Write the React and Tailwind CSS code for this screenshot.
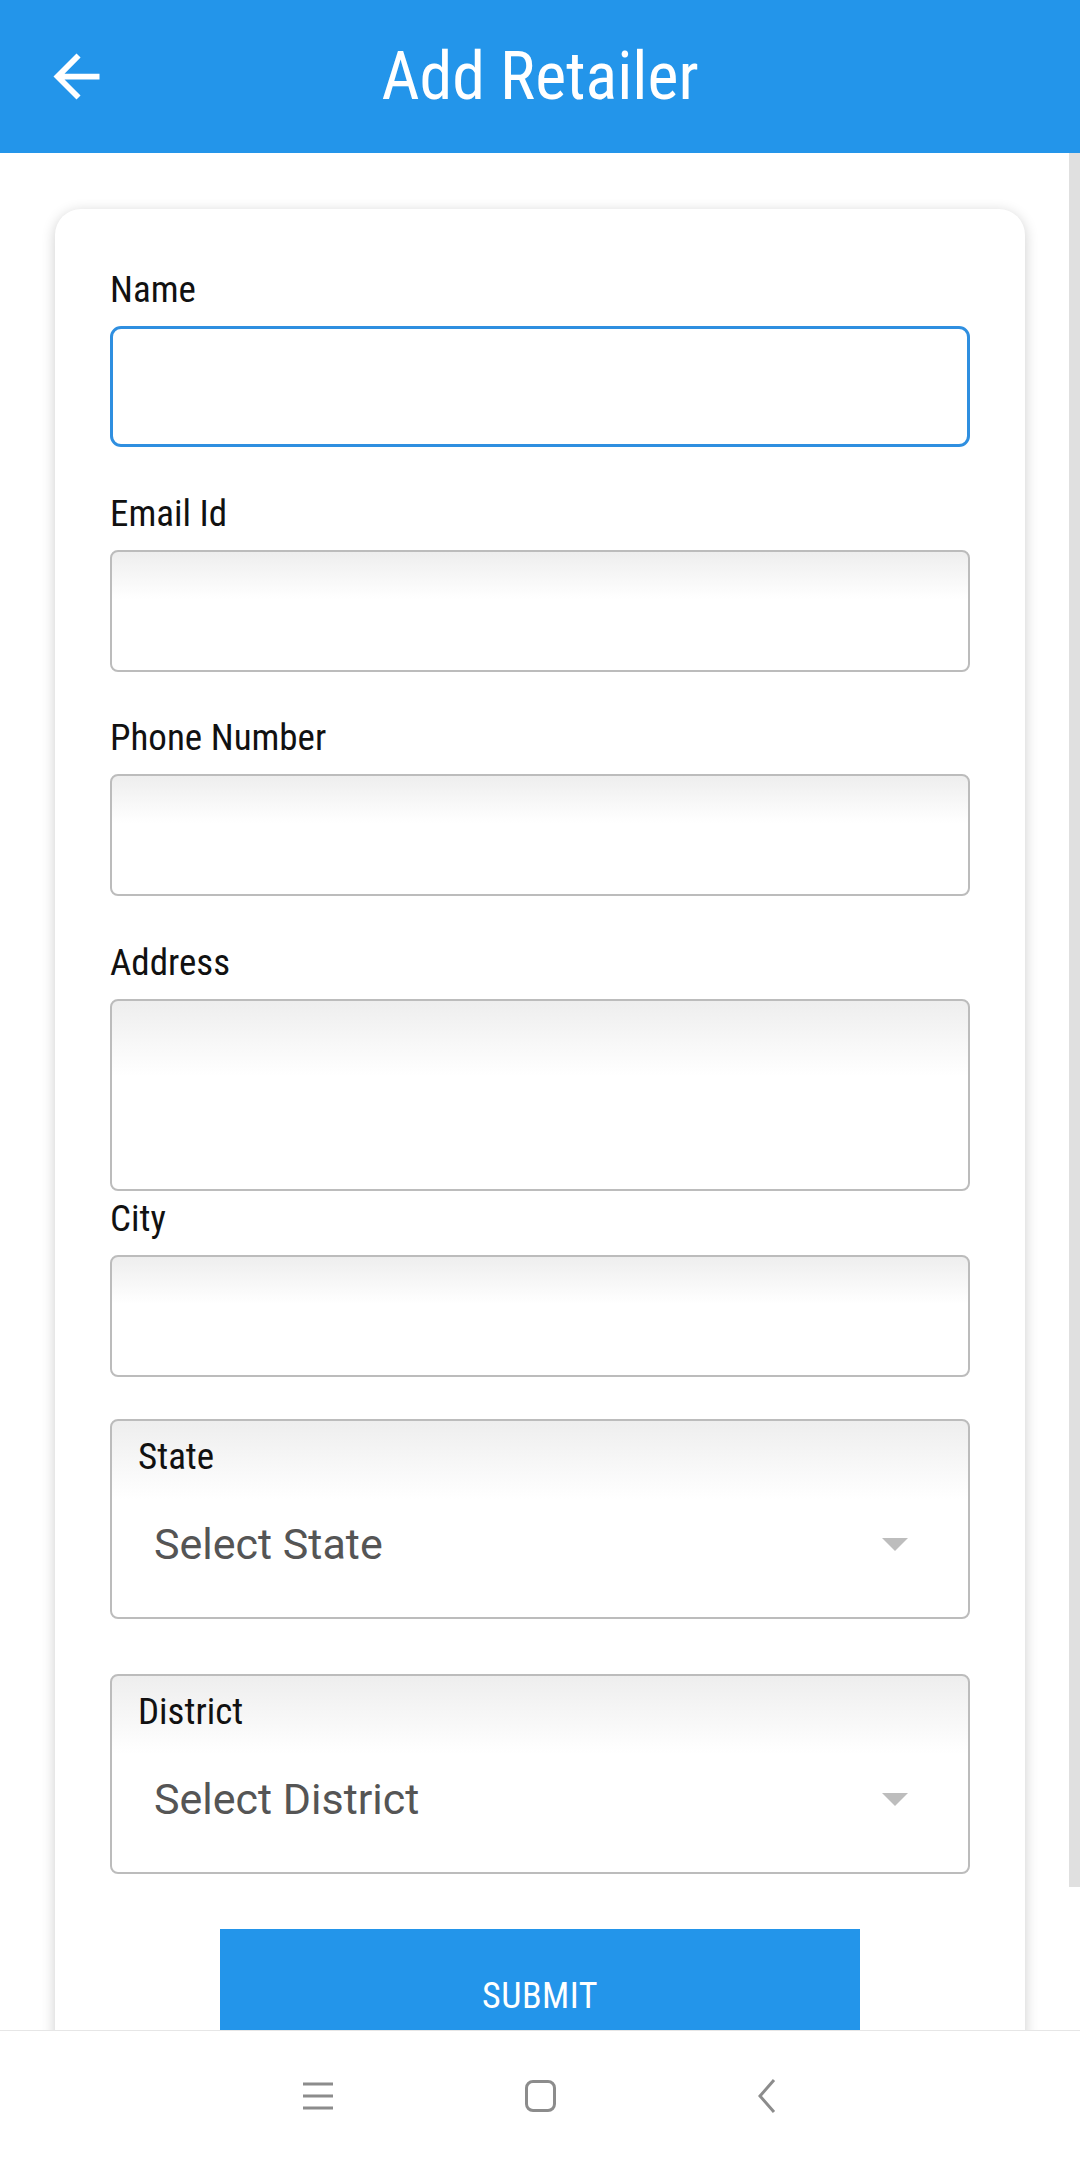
import React from 'react'

const narrow = "font-['Liberation_Sans_Narrow','Roboto_Condensed',Roboto,sans-serif]"

// Campo de texto con etiqueta encima
const Field = ({ label, className = '', height = 'h-[122px]', active = false, multiline = false }) => {
  const base = active
    ? 'border-[3px] border-[#2f8fe0] rounded-[11px] bg-white'
    : 'border-2 border-[#bcbcbc] rounded-[8px] bg-linear-to-b from-[#eeeeee] to-white to-40%'
  return (
    <div className={className}>
      <p className="text-[37px] leading-[44px] text-[#111]">{label}</p>
      {multiline ? (
        <textarea readOnly className={`mt-[14px] block w-full resize-none outline-none ${height} ${base}`} />
      ) : (
        <input readOnly className={`mt-[14px] block w-full outline-none ${height} ${base}`} />
      )}
    </div>
  )
}

// Selector desplegable con etiqueta dentro del recuadro
const SelectBox = ({ label, placeholder, className = '' }) => (
  <div
    className={`h-[200px] border-2 border-[#bcbcbc] rounded-[8px] bg-linear-to-b from-[#eeeeee] to-white to-40% pt-[14px] ${className}`}
  >
    <p className="pl-[26px] text-[37px] leading-[44px] text-[#111]">{label}</p>
    <div className="mt-[40px] flex items-center justify-between pl-[42px] pr-[60px]">
      <span className="font-['Roboto',sans-serif] text-[43px] leading-[50px] text-[#555]">{placeholder}</span>
      <svg width="26" height="13" viewBox="0 0 26 13">
        <path d="M0 0h26L13 13z" fill="#bdbdbd" />
      </svg>
    </div>
  </div>
)

export default function App() {
  return (
    <div className={`h-[2160px] w-[1080px] flex flex-col overflow-hidden bg-white ${narrow}`}>
      <header className="h-[153px] shrink-0 bg-[#2395ea] grid grid-cols-[153px_1fr_153px] items-center">
        <div className="flex items-center justify-center">
          <svg width="69" height="69" viewBox="0 0 24 24" fill="white">
            <path d="M20 11H7.83l5.59-5.59L12 4l-8 8 8 8 1.41-1.41L7.83 13H20v-2z" />
          </svg>
        </div>
        <h1 className="text-center text-[66px] leading-[80px] text-white">Add Retailer</h1>
        <div />
      </header>

      <main className="relative flex-1 overflow-hidden">
        <div className="absolute right-0 top-0 w-[11px] h-[1734px] bg-[#e0e0e0]" />

        <div className="ml-[55px] mt-[56px] w-[970px] rounded-[26px] bg-white shadow-[0_3px_14px_rgba(0,0,0,0.2)] px-[55px] pt-[59px] pb-[60px]">
          <Field label="Name" active height="h-[121px]" />
          <Field label="Email Id" className="mt-[45px]" />
          <Field label="Phone Number" className="mt-[44px]" />
          <Field label="Address" className="mt-[45px]" height="h-[192px]" multiline />
          <Field label="City" className="mt-[6px]" />
          <SelectBox label="State" placeholder="Select State" className="mt-[42px]" />
          <SelectBox label="District" placeholder="Select District" className="mt-[55px]" />
          <button className="mt-[55px] mx-auto block w-[640px] h-[134px] bg-[#2395ea] text-white text-[36px] tracking-[0.5px]">
            SUBMIT
          </button>
        </div>
      </main>

      <nav className="h-[130px] shrink-0 border-t border-[#e6e6e6] bg-white flex items-center pl-[303px]">
        <svg width="30" height="28" viewBox="0 0 30 28">
          <path d="M0 2h30M0 14h30M0 26h30" stroke="#8c8c8c" strokeWidth="3" />
        </svg>
        <div className="ml-[192px] w-[31px] h-[32px] rounded-[8px] border-[3px] border-[#8c8c8c]" />
        <svg width="18" height="34" viewBox="0 0 18 34" className="ml-[202px]">
          <path d="M16 1L2 17l14 16" fill="none" stroke="#8c8c8c" strokeWidth="3" />
        </svg>
      </nav>
    </div>
  )
}
